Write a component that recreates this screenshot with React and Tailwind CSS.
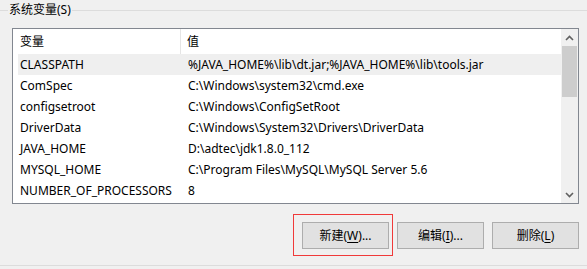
import React from "react";

const rows = [
  ["CLASSPATH", "%JAVA_HOME%\\lib\\dt.jar;%JAVA_HOME%\\lib\\tools.jar", true],
  ["ComSpec", "C:\\Windows\\system32\\cmd.exe"],
  ["configsetroot", "C:\\Windows\\ConfigSetRoot"],
  ["DriverData", "C:\\Windows\\System32\\Drivers\\DriverData"],
  ["JAVA_HOME", "D:\\adtec\\jdk1.8.0_112"],
  ["MYSQL_HOME", "C:\\Program Files\\MySQL\\MySQL Server 5.6"],
  ["NUMBER_OF_PROCESSORS", "8"],
];

const font = { fontFamily: '"Noto Sans", "Noto Sans CJK SC", sans-serif' };

function Chevron({ down }) {
  return (
    <svg width="9" height="6" viewBox="0 0 9 6">
      <path
        d={down ? "M1 1 L4.5 4.5 L8 1" : "M1 5 L4.5 1.5 L8 5"}
        fill="none"
        stroke="#606060"
        strokeWidth="1.6"
      />
    </svg>
  );
}

function Btn({ pre, key1, post }) {
  return (
    <button className="w-[87px] h-[27px] bg-[#e1e1e1] border border-[#adadad] text-[12px] text-black flex items-center justify-center leading-none">
      {pre}(<span className="underline underline-offset-2">{key1}</span>){post}
    </button>
  );
}

export default function App() {
  return (
    <div
      className="w-[587px] h-[269px] bg-[#f0f0f0] overflow-hidden text-[12px] text-black"
      style={font}
    >
      <div className="flex items-center h-[20px] mt-[0px]">
        <div className="w-[8px] border-t border-[#dcdcdc]" />
        <span className="px-[1px] leading-none">系统变量(S)</span>
        <div className="flex-1 border-t border-[#dcdcdc]" />
      </div>
      <div className="ml-[12px] mt-[8px] w-[567px] h-[176px] border border-[#828790] bg-white flex">
        <div className="flex-1 flex flex-col">
          <div className="h-[25px] flex items-center">
            <div className="w-[168px] pl-[7px] h-full flex items-center border-r border-[#e5e5e5]">变量</div>
            <div className="pl-[6px]">值</div>
          </div>
          <div className="pl-[5px] flex flex-col">
            {rows.map(([k, v, sel]) => (
              <div
                key={k}
                className={`h-[21px] flex items-center pl-[2px] ${sel ? "bg-[#efefef]" : ""}`}
              >
                <div className="w-[168px] whitespace-nowrap">{k}</div>
                <div className="whitespace-nowrap">{v}</div>
              </div>
            ))}
          </div>
        </div>
        <div className="w-[17px] bg-[#f0f0f0] flex flex-col items-center">
          <div className="h-[17px] flex items-center justify-center">
            <Chevron />
          </div>
          <div className="w-[15px] h-[51px] bg-[#cdcdcd]" />
          <div className="flex-1" />
          <div className="h-[17px] flex items-center justify-center">
            <Chevron down />
          </div>
        </div>
      </div>
      <div className="relative flex justify-end gap-[8px] mt-[18px] w-[579px]">
        <div className="relative">
          <div className="absolute left-[-9px] top-[-8px] w-[100px] h-[42px] border border-[#f03a3a]" />
          <Btn pre="新建" key1="W" post="..." />
        </div>
        <Btn pre="编辑" key1="I" post="..." />
        <Btn pre="删除" key1="L" post="" />
      </div>
      <div className="mt-[16px] border-t border-[#dcdcdc]" />
    </div>
  );
}
